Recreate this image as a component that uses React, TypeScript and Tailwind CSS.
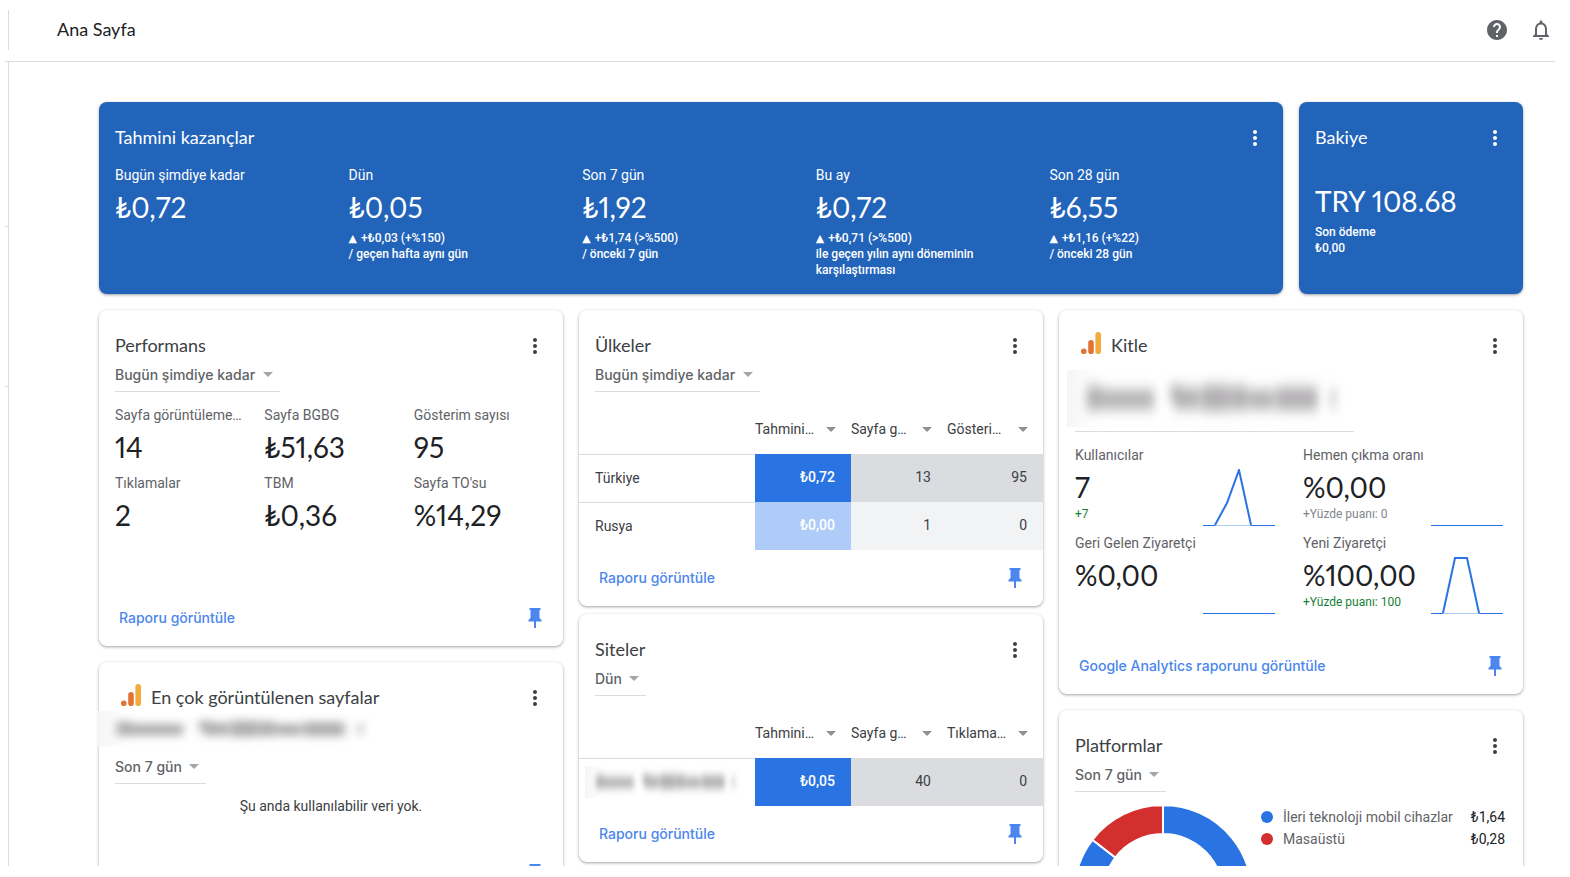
import type { ReactNode } from 'react';
import { MdArrowDropDown, MdHelp, MdMoreVert, MdNotificationsNone } from 'react-icons/md';

type Metric = { label: string; value: string };

const earnings = [
  { label: 'Bugün şimdiye kadar', value: '₺0,72', change: '', note: '' },
  { label: 'Dün', value: '₺0,05', change: '+₺0,03 (+%150)', note: '/ geçen hafta aynı gün' },
  { label: 'Son 7 gün', value: '₺1,92', change: '+₺1,74 (>%500)', note: '/ önceki 7 gün' },
  { label: 'Bu ay', value: '₺0,72', change: '+₺0,71 (>%500)', note: 'ile geçen yılın aynı döneminin karşılaştırması' },
  { label: 'Son 28 gün', value: '₺6,55', change: '+₺1,16 (+%22)', note: '/ önceki 28 gün' },
];

const performance: Metric[] = [
  { label: 'Sayfa görüntüleme…', value: '14' },
  { label: 'Sayfa BGBG', value: '₺51,63' },
  { label: 'Gösterim sayısı', value: '95' },
  { label: 'Tıklamalar', value: '2' },
  { label: 'TBM', value: '₺0,36' },
  { label: "Sayfa TO'su", value: '%14,29' },
];

const audience = [
  { label: 'Kullanıcılar', value: '7', note: '+7', up: true, line: '12,56 24,34 36,1 48,56' },
  { label: 'Hemen çıkma oranı', value: '%0,00', note: '+Yüzde puanı: 0', up: false, line: '' },
  { label: 'Geri Gelen Ziyaretçi', value: '%0,00', note: '', up: false, line: '' },
  { label: 'Yeni Ziyaretçi', value: '%100,00', note: '+Yüzde puanı: 100', up: true, line: '12,56 24,1 36,1 48,56' },
];

function PinIcon() {
  return (
    <svg width="24" height="24" viewBox="0 0 24 24" fill="#4a86ee" aria-hidden="true">
      <path d="M6.5 2h11v2h-1v8l2 2v1.500h-5.500V22h-2v-6.500H5.500V14l2-2V4h-1z" />
    </svg>
  );
}

function AnalyticsIcon() {
  return (
    <svg width="20" height="22" viewBox="0 0 20 22" aria-hidden="true">
      <circle cx="2.800" cy="19.200" r="2.800" fill="#e07435" />
      <rect x="7.200" y="8" width="5.600" height="14" rx="2.800" fill="#e07435" />
      <rect x="14.400" y="0" width="5.600" height="22" rx="2.800" fill="#f4ab3b" />
    </svg>
  );
}

function Card({ title, icon, className = '', children }: { title: string; icon?: ReactNode; className?: string; children: ReactNode }) {
  return (
    <section className={`flex flex-col rounded-lg pt-6 pb-4 shadow-[0_1px_2px_rgba(60,64,67,0.3),0_1px_3px_1px_rgba(60,64,67,0.15)] ${className}`}>
      <header className="flex h-6 items-center px-4">
        {icon && <span className="mr-2.5 mb-1.5 ml-1.5">{icon}</span>}
        <h2 className="flex-1 pb-0.5 font-[Lato,sans-serif] text-lg leading-[22px]">{title}</h2>
        <button type="button" aria-label="Diğer seçenekler" className="size-6">
          <MdMoreVert className="size-6" />
        </button>
      </header>
      {children}
    </section>
  );
}

function Footer({ label }: { label?: string }) {
  return (
    <footer className="mt-auto flex h-6 items-center pr-4 pl-5">
      {label && <a href="#" className="font-[Inter,sans-serif] text-sm font-medium text-[#4a86ee]">{label}</a>}
      <button type="button" aria-label="Sabitle" className="ml-auto"><PinIcon /></button>
    </footer>
  );
}

function RangeSelect({ value, className = '' }: { value: string; className?: string }) {
  return (
    <div className={`relative mx-4 self-start border-b border-[#dadce0] ${className}`}>
      <select aria-label="Tarih aralığı" className="block h-[33px] appearance-none pr-6 font-[Inter,sans-serif] text-sm font-medium text-[#5f6368]">
        <option>{value}</option>
      </select>
      <MdArrowDropDown className="pointer-events-none absolute top-1 right-0 size-6 text-[#a3a5a8]" />
    </div>
  );
}

/* Blurred stand-in for private property names */
function Redacted({ className }: { className: string }) {
  return (
    <svg viewBox="0 0 290 56" preserveAspectRatio="none" aria-hidden="true" className={className}>
      <defs>
        <linearGradient id="veil">
          <stop offset="0" stopColor="#f5f5f5" />
          <stop offset="0.1" stopColor="#fff" />
          <stop offset="1" stopColor="#fff" />
        </linearGradient>
        <filter id="smudge" x="-10%" y="-100%" width="120%" height="300%">
          <feGaussianBlur stdDeviation="5 7" />
        </filter>
      </defs>
      <rect width="290" height="56" fill="url(#veil)" />
      <g fill="#b0aeb0" filter="url(#smudge)">
        <rect x="20" y="16" width="15" height="23" />
        <rect x="33" y="20" width="55" height="18" />
        <rect x="104" y="15" width="12" height="14" />
        <rect x="108" y="18" width="26" height="20" />
        <rect x="136" y="15" width="28" height="25" />
        <rect x="165" y="16" width="17" height="23" />
        <rect x="183" y="20" width="26" height="18" />
        <rect x="211" y="17" width="42" height="22" />
        <rect x="267" y="19" width="4" height="18" />
      </g>
    </svg>
  );
}

function DataTable({ columns, rows }: { columns: string[]; rows: { name: ReactNode; cells: string[]; strong: boolean }[] }) {
  return (
    <table className="mt-3.5 mb-4 w-full table-fixed border-separate border-spacing-0 text-sm text-[#3c4043]">
      <thead>
        <tr className="h-12">
          <td />
          {columns.map((column) => (
            <th key={column} scope="col" className="w-24 p-0 pb-0.5 text-left font-normal">
              <button type="button" className="flex w-full items-center justify-between pr-2">
                {column}
                <MdArrowDropDown className="size-6 text-[#8f9194]" />
              </button>
            </th>
          ))}
        </tr>
      </thead>
      <tbody>
        {rows.map((row) => (
          <tr key={row.cells.join()} className="h-12">
            <th scope="row" className="border-t border-[#dadce0] p-0 pb-0.5 pl-4 text-left font-normal">{row.name}</th>
            {row.cells.map((cell, i) => (
              <td
                key={i}
                className={`p-0 pr-4 pb-0.5 text-right ${
                  i === 0
                    ? row.strong ? 'bg-[#2a73e2] font-medium text-white' : 'bg-[#afcbf8] font-medium text-white'
                    : row.strong ? 'bg-[#dadce0]' : 'bg-[#f1f3f4]'
                }`}
              >
                {cell}
              </td>
            ))}
          </tr>
        ))}
      </tbody>
    </table>
  );
}

function Sparkline({ line }: { line: string }) {
  return (
    <svg width="72" height="57" viewBox="0 0 72 57" fill="none" className="shrink-0" aria-hidden="true">
      <path d="M0 56.500H72" stroke={line ? '#aecbfa' : '#2a73e2'} />
      {line && (
        <>
          <path d="M0 56.500H12M48 56.500H72" stroke="#2a73e2" />
          <polyline points={line} stroke="#2a73e2" strokeWidth="2" />
        </>
      )}
    </svg>
  );
}

function Donut() {
  return (
    <svg width="176" height="176" viewBox="-88 -88 176 176" stroke="#fff" strokeWidth="2" className="shrink-0" aria-hidden="true">
      <path d="M0 -89A89 89 0 1 1 -70.600 -54.200L-47.600 -36.500A60 60 0 1 0 0 -60Z" fill="#2a73e2" />
      <path d="M0 -89A89 89 0 0 0 -70.600 -54.200L-47.600 -36.500A60 60 0 0 1 0 -60Z" fill="#d32f2f" />
    </svg>
  );
}

export default function App() {
  return (
    <div className="h-screen bg-white pr-[15px] pb-[11px] pl-[5px] font-[Roboto,sans-serif] text-[#202124]">
      <div className="flex h-full flex-col overflow-hidden">
        {/* TOP BAR */}
        <header className="flex h-[62px] shrink-0 items-center border-b border-[#dadce0] pr-0.5 pb-0.5 pl-[3px]">
          <div className="h-10 w-px bg-[#dadce0]" />
          <h1 className="ml-12 flex-1 pb-0.5 font-[Lato,sans-serif] text-lg">Ana Sayfa</h1>
          <div className="flex gap-5 text-[#5f6368]">
            <button type="button" aria-label="Yardım"><MdHelp className="size-6" /></button>
            <button type="button" aria-label="Bildirimler"><MdNotificationsNone className="size-6" /></button>
          </div>
        </header>

        <div className="flex min-h-0 flex-1">
          {/* NAV EDGE */}
          <nav className="w-1 shrink-0 border-r border-[#dadce0]">
            <div className="h-[165px] border-b border-[#dadce0]" />
            <div className="h-40 border-b border-[#dadce0]" />
          </nav>

          <main className="min-w-0 flex-1 overflow-hidden pt-10 pr-8 pl-[90px]">
            <div className="grid grid-cols-[1fr_224px] gap-4 text-white">
              <Card title="Tahmini kazançlar" className="bg-[#2264ba]">
                <div className="mt-4 grid grid-cols-5 pl-4">
                  {earnings.map((e) => (
                    <div key={e.label} className="pr-8">
                      <h3 className="text-sm leading-[18px]">{e.label}</h3>
                      <p className="mt-[7px] font-[Lato,sans-serif] text-[28px] leading-8 proportional-nums">{e.value}</p>
                      {e.change && (
                        <p className="mt-[7px] text-xs leading-4 font-medium">
                          <span className="mr-1 font-['DejaVu_Sans'] text-[11px] leading-none">▲</span>
                          {e.change}
                          <br />
                          {e.note}
                        </p>
                      )}
                    </div>
                  ))}
                </div>
              </Card>
              <Card title="Bakiye" className="bg-[#2264ba]">
                <p className="mt-[35px] px-4 font-[Lato,sans-serif] text-[28px] leading-8 proportional-nums">TRY 108.68</p>
                <p className="mt-[7px] px-4 text-xs leading-4 font-medium">Son ödeme<br />₺0,00</p>
              </Card>
            </div>

            <div className="mt-4 grid grid-cols-3 items-start gap-4 text-[#3c4043]">
              {/* LEFT COLUMN */}
              <div className="flex flex-col gap-4">
                <Card title="Performans" className="min-h-[336px]">
                  <RangeSelect value="Bugün şimdiye kadar" />
                  <dl className="mt-3.5 grid grid-cols-3 gap-y-2.5 pl-4">
                    {performance.map((m) => (
                      <div key={m.label}>
                        <dt className="text-sm leading-[18px] text-[#5f6368]">{m.label}</dt>
                        <dd className="mt-[7px] mb-px font-[Lato,sans-serif] text-[28px] leading-8 text-[#202124] proportional-nums">{m.value}</dd>
                      </div>
                    ))}
                  </dl>
                  <Footer label="Raporu görüntüle" />
                </Card>
                <Card title="En çok görüntülenen sayfalar" icon={<AnalyticsIcon />} className="min-h-60">
                  <Redacted className="mt-px -ml-0.5 h-9 w-[284px] shrink-0" />
                  <RangeSelect value="Son 7 gün" className="mt-[3px]" />
                  <p className="mt-3 text-center text-sm">Şu anda kullanılabilir veri yok.</p>
                  <Footer />
                </Card>
              </div>

              {/* MIDDLE COLUMN */}
              <div className="flex flex-col gap-2">
                <Card title="Ülkeler">
                  <RangeSelect value="Bugün şimdiye kadar" />
                  <DataTable
                    columns={['Tahmini…', 'Sayfa g…', 'Gösteri…']}
                    rows={[
                      { name: 'Türkiye', cells: ['₺0,72', '13', '95'], strong: true },
                      { name: 'Rusya', cells: ['₺0,00', '1', '0'], strong: false },
                    ]}
                  />
                  <Footer label="Raporu görüntüle" />
                </Card>
                <Card title="Siteler">
                  <RangeSelect value="Dün" />
                  <DataTable
                    columns={['Tahmini…', 'Sayfa g…', 'Tıklama…']}
                    rows={[{ name: <Redacted className="-ml-2.5 h-8 w-40" />, cells: ['₺0,05', '40', '0'], strong: true }]}
                  />
                  <Footer label="Raporu görüntüle" />
                </Card>
              </div>

              {/* RIGHT COLUMN */}
              <div className="flex flex-col gap-4">
                <Card title="Kitle" icon={<AnalyticsIcon />} className="min-h-96">
                  <div className="mx-4 mt-3 w-[279px] border-b border-[#dadce0] pb-1">
                    <Redacted className="-ml-2 h-[57px] w-[287px]" />
                  </div>
                  <dl className="mt-3.5 grid grid-cols-2 gap-x-7 gap-y-2 pr-5 pl-4">
                    {audience.map((m) => (
                      <div key={m.label} className="flex h-20 items-end justify-between">
                        <div className="h-full whitespace-nowrap">
                          <dt className="text-sm leading-[18px] text-[#5f6368]">{m.label}</dt>
                          <dd className="mt-[7px] font-[Lato,sans-serif] text-[28px] leading-8 text-[#202124] proportional-nums">{m.value}</dd>
                          <dd className={`mt-[3px] text-xs leading-4 ${m.up ? 'text-[#188038]' : 'text-[#80868b]'}`}>{m.note}</dd>
                        </div>
                        <Sparkline line={m.line} />
                      </div>
                    ))}
                  </dl>
                  <Footer label="Google Analytics raporunu görüntüle" />
                </Card>
                <Card title="Platformlar">
                  <RangeSelect value="Son 7 gün" />
                  <div className="mt-3.5 flex justify-between pr-[18px] pl-4">
                    <Donut />
                    <ul className="text-sm leading-[22px]">
                      <li className="flex items-center gap-2.5">
                        <span className="size-3 rounded-full bg-[#2a73e2]" />
                        <span className="flex-1 text-[#5f6368]">İleri teknoloji mobil cihazlar</span>
                        <span className="ml-2 text-[#202124]">₺1,64</span>
                      </li>
                      <li className="flex items-center gap-2.5">
                        <span className="size-3 rounded-full bg-[#d32f2f]" />
                        <span className="flex-1 text-[#5f6368]">Masaüstü</span>
                        <span className="ml-2 text-[#202124]">₺0,28</span>
                      </li>
                    </ul>
                  </div>
                </Card>
              </div>
            </div>
          </main>
        </div>
      </div>
    </div>
  );
}
